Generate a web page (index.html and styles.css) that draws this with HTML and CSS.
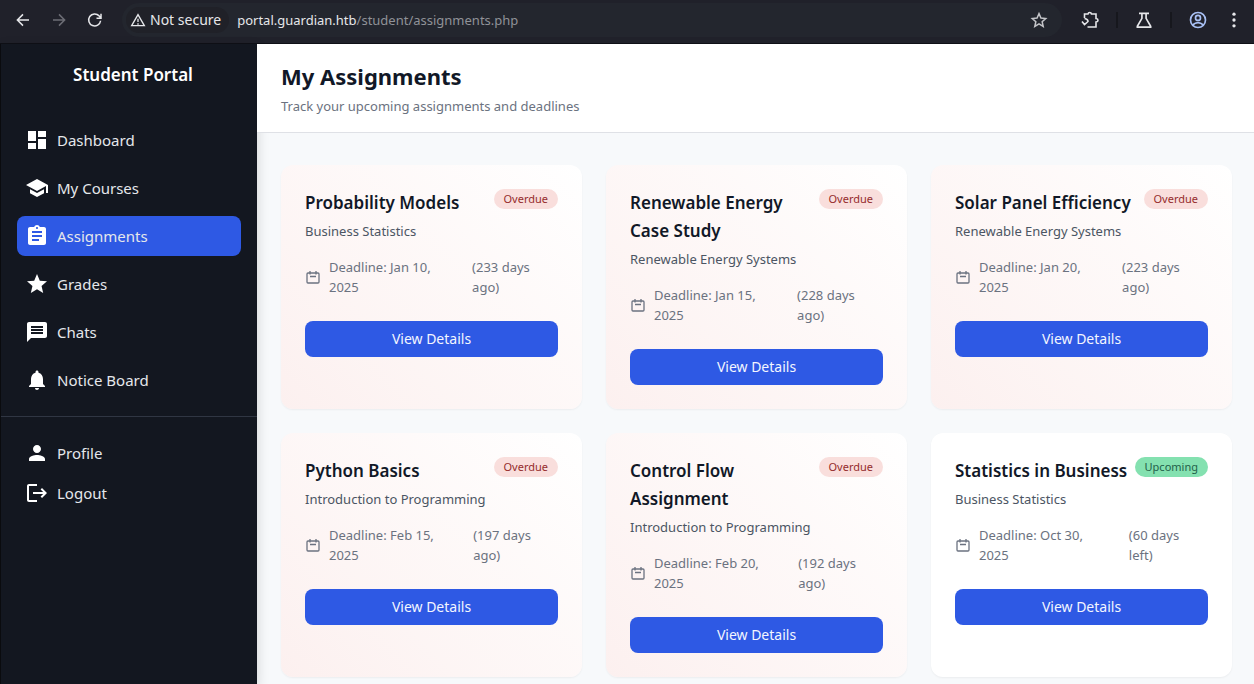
FILE: index.html
```html
<!DOCTYPE html>
<html lang="en">
<head>
<meta charset="utf-8">
<title>My Assignments</title>
<link rel="stylesheet" href="styles.css">
</head>
<body>
<div class="window">
  <div class="toolbar">
    <button class="tool" aria-label="Back"><svg viewBox="0 0 24 24"><path d="M20 12H5M12 4.500L4.500 12L12 19.500"/></svg></button>
    <button class="tool tool-off" aria-label="Forward" disabled><svg viewBox="0 0 24 24"><path d="M4 12h15M12 4.500L19.500 12L12 19.500"/></svg></button>
    <button class="tool" aria-label="Reload"><svg viewBox="0 0 24 24"><path d="M19.500 13A8 8 0 1 1 17.500 6.500L19.500 9M20 3.500V9.500H14"/></svg></button>
    <div class="address">
      <button class="security"><svg viewBox="0 0 24 24"><path d="M12 4L2.500 20.500H21.500ZM12 10v5M12 17v2"/></svg>Not secure</button>
      <span class="url">portal.guardian.htb<span class="path">/student/assignments.php</span></span>
      <button class="tool bookmark" aria-label="Bookmark"><svg viewBox="0 0 24 24"><path d="M12 3.500l2.600 5.900 6.400.6-4.800 4.300 1.400 6.300L12 17.300l-5.600 3.300 1.400-6.300L3 10l6.400-.6z"/></svg></button>
    </div>
    <div class="actions">
      <button class="tool" aria-label="Extensions"><svg class="puzzle" viewBox="0 0 20 20"><path d="M4.500 8V4H8Q8.200 2.500 9.700 2.500T11.500 4H16V8.500Q18 8.700 18 10.200T16 12V17H7.500M2 11.500L4.500 14.500L8 11.500Q8 9 4.500 8.500"/></svg></button>
      <span class="rule"></span>
      <button class="tool" aria-label="Labs"><svg viewBox="0 0 24 24"><path d="M6 4H18M9.500 4V10L4 19.500V20.500H20V19.500L14.500 10V4"/></svg></button>
      <span class="rule"></span>
      <button class="tool profile" aria-label="Browser profile"><svg viewBox="0 0 24 24"><circle cx="12" cy="12" r="9"/><circle cx="12" cy="9.500" r="3"/><path d="M5.500 18Q12 12.500 18.500 18"/></svg></button>
      <button class="tool menu" aria-label="Menu"><svg viewBox="0 0 24 24"><circle cx="12" cy="5" r="2"/><circle cx="12" cy="12" r="2"/><circle cx="12" cy="19" r="2"/></svg></button>
    </div>
  </div>
  <div class="app">
    <aside class="sidebar">
      <h2 class="brand">Student Portal</h2>
      <nav class="nav">
        <a href="#"><svg viewBox="0 0 24 24"><path d="M3 13h8V3H3zm0 8h8v-6H3zm10 0h8V11h-8zm0-18v6h8V3z"/></svg>Dashboard</a>
        <a href="#"><svg viewBox="0 0 24 24"><path d="M5 13.180v4L12 21l7-3.820v-4L12 17zM12 3L1 9l11 6 9-4.910V17h2V9z"/></svg>My Courses</a>
        <a href="#" class="active"><svg viewBox="0 0 24 24"><path d="M19 3h-4.180C14.400 1.840 13.300 1 12 1s-2.400.84-2.820 2H5c-1.100 0-2 .9-2 2v14c0 1.100.9 2 2 2h14c1.100 0 2-.9 2-2V5c0-1.100-.9-2-2-2zm-7 0c.55 0 1 .45 1 1s-.45 1-1 1-1-.45-1-1 .45-1 1-1zm2 14H7v-2h7zm3-4H7v-2h10zm0-4H7V7h10z"/></svg>Assignments</a>
        <a href="#"><svg viewBox="0 0 24 24"><path d="M12 17.270L18.180 21l-1.640-7.030L22 9.240l-7.190-.61L12 2 9.190 8.630 2 9.240l5.460 4.730L5.820 21z"/></svg>Grades</a>
        <a href="#"><svg viewBox="0 0 24 24"><path d="M20 2H4c-1.100 0-1.990.9-1.990 2L2 22l4-4h14c1.100 0 2-.9 2-2V4c0-1.100-.9-2-2-2zm-2 12H6v-2h12zm0-3H6V9h12zm0-3H6V6h12z"/></svg>Chats</a>
        <a href="#"><svg viewBox="0 0 24 24"><path d="M12 22c1.100 0 2-.9 2-2h-4c0 1.100.89 2 2 2zm6-6v-5c0-3.070-1.640-5.640-4.500-6.320V4c0-.83-.67-1.500-1.500-1.500s-1.500.67-1.500 1.500v.68C7.630 5.360 6 7.920 6 11v5l-2 2v1h16v-1z"/></svg>Notice Board</a>
      </nav>
      <nav class="nav account">
        <a href="#"><svg viewBox="0 0 24 24"><path d="M12 12c2.210 0 4-1.790 4-4s-1.790-4-4-4-4 1.790-4 4 1.790 4 4 4zm0 2c-2.670 0-8 1.340-8 4v2h16v-2c0-2.660-5.330-4-8-4z"/></svg>Profile</a>
        <a href="#"><svg viewBox="0 0 24 24"><path d="M17 7l-1.410 1.410L18.170 11H8v2h10.170l-2.580 2.580L17 17l5-5zM4 5h8V3H4c-1.100 0-2 .9-2 2v14c0 1.100.9 2 2 2h8v-2H4z"/></svg>Logout</a>
      </nav>
    </aside>
    <main class="main">
      <header class="head"><h1>My Assignments</h1><p>Track your upcoming assignments and deadlines</p></header>
      <div class="grid">
        <article class="card overdue"><div class="top"><div><h3>Probability Models</h3><p>Business Statistics</p></div><span class="badge">Overdue</span></div>
          <div class="due"><svg viewBox="0 0 16 16"><path d="M3 4h10q1 0 1 1v8q0 1-1 1H3q-1 0-1-1V5q0-1 1-1zM5 2v3.500M11 2v3.500M5 7.500h6"/></svg><span class="date">Deadline: Jan 10, 2025</span><span class="left">(233 days ago)</span></div><a class="view" href="#">View Details</a></article>
        <article class="card overdue"><div class="top"><div><h3>Renewable Energy Case Study</h3><p>Renewable Energy Systems</p></div><span class="badge">Overdue</span></div>
          <div class="due"><svg viewBox="0 0 16 16"><path d="M3 4h10q1 0 1 1v8q0 1-1 1H3q-1 0-1-1V5q0-1 1-1zM5 2v3.500M11 2v3.500M5 7.500h6"/></svg><span class="date">Deadline: Jan 15, 2025</span><span class="left">(228 days ago)</span></div><a class="view" href="#">View Details</a></article>
        <article class="card overdue"><div class="top"><div><h3>Solar Panel Efficiency</h3><p>Renewable Energy Systems</p></div><span class="badge">Overdue</span></div>
          <div class="due"><svg viewBox="0 0 16 16"><path d="M3 4h10q1 0 1 1v8q0 1-1 1H3q-1 0-1-1V5q0-1 1-1zM5 2v3.500M11 2v3.500M5 7.500h6"/></svg><span class="date">Deadline: Jan 20, 2025</span><span class="left">(223 days ago)</span></div><a class="view" href="#">View Details</a></article>
        <article class="card overdue"><div class="top"><div><h3>Python Basics</h3><p>Introduction to Programming</p></div><span class="badge">Overdue</span></div>
          <div class="due"><svg viewBox="0 0 16 16"><path d="M3 4h10q1 0 1 1v8q0 1-1 1H3q-1 0-1-1V5q0-1 1-1zM5 2v3.500M11 2v3.500M5 7.500h6"/></svg><span class="date">Deadline: Feb 15, 2025</span><span class="left">(197 days ago)</span></div><a class="view" href="#">View Details</a></article>
        <article class="card overdue"><div class="top"><div><h3>Control Flow Assignment</h3><p>Introduction to Programming</p></div><span class="badge">Overdue</span></div>
          <div class="due"><svg viewBox="0 0 16 16"><path d="M3 4h10q1 0 1 1v8q0 1-1 1H3q-1 0-1-1V5q0-1 1-1zM5 2v3.500M11 2v3.500M5 7.500h6"/></svg><span class="date">Deadline: Feb 20, 2025</span><span class="left">(192 days ago)</span></div><a class="view" href="#">View Details</a></article>
        <article class="card"><div class="top"><div><h3>Statistics in Business</h3><p>Business Statistics</p></div><span class="badge upcoming">Upcoming</span></div>
          <div class="due"><svg viewBox="0 0 16 16"><path d="M3 4h10q1 0 1 1v8q0 1-1 1H3q-1 0-1-1V5q0-1 1-1zM5 2v3.500M11 2v3.500M5 7.500h6"/></svg><span class="date">Deadline: Oct 30, 2025</span><span class="left">(60 days left)</span></div><a class="view" href="#">View Details</a></article>
      </div>
    </main>
  </div>
</div>
</body>
</html>
```

FILE: styles.css
```css
* { box-sizing: border-box; }
body, h1, h2, h3, p { margin: 0; }
body { font-family: "Noto Sans", sans-serif; font-size: 13px; line-height: 20px; color: #111827; }
a { text-decoration: none; color: inherit; }
button { font: inherit; color: inherit; background: none; border: 0; padding: 0; }

.window { height: 100vh; display: flex; flex-direction: column; overflow: hidden; }

.toolbar { display: flex; align-items: center; padding: 3px 10px 6px 14px; gap: 18px; background: #20212a; border-bottom: 1px solid #0f1016; color: #e6e7ea; }
.tool { display: flex; flex: none; }
.tool svg, .security svg { width: 18px; height: 18px; fill: none; stroke: currentColor; stroke-width: 2; }
.tool-off { color: #6c6d75; }
.address { flex: 1; display: flex; align-items: center; height: 34px; padding: 0 14px 0 4px; border-radius: 17px; background: #23262e; }
.security { display: flex; align-items: center; gap: 4px; height: 26px; padding: 0 8px 0 4px; border-radius: 13px; background: #202128; font-size: 14px; }
.security svg { width: 16px; height: 16px; }
.url { flex: 1; margin-left: 8px; }
.path { color: #909298; }
.bookmark { color: #c4c5c9; }
.actions { display: flex; align-items: center; gap: 16px; }
.actions .tool svg { width: 20px; height: 20px; }
.actions .tool .puzzle { stroke-width: 1.6; }
.rule { width: 2px; height: 16px; background: #16171d; }
.profile { color: #a8c0f4; }
.tool.menu svg { fill: currentColor; stroke: none; }

.app { flex: 1; min-height: 0; display: flex; border-left: 1px solid #0b0c10; }
.sidebar { width: 256px; flex: none; background: #131720; color: #fff; position: relative; z-index: 1; box-shadow: 0 4px 12px rgba(0, 0, 0, .16); }
.brand { padding: 18px 0 18px 8px; text-align: center; font-size: 17px; line-height: 26px; font-weight: 600; }
.nav { display: flex; flex-direction: column; gap: 8px; padding: 14px 16px 16px; }
.nav a { display: flex; align-items: center; gap: 8px; height: 40px; padding: 0 8px; border-radius: 8px; font-size: 15px; color: #e5e7eb; }
.nav svg { width: 24px; height: 24px; fill: #fff; }
.nav .active { background: #2e59e4; }
.account { border-top: 1px solid #303643; gap: 0; padding-top: 16px; }

.main { flex: 1; min-width: 0; background: #f7f9fb; }
.head { position: relative; z-index: 2; padding: 16px 24px; background: #fff; border-bottom: 1px solid #dfe1e6; }
.head h1 { font-size: 22px; line-height: 32px; font-weight: 700; }
.head p { margin-top: 4px; color: #6b7280; }
.grid { display: grid; grid-template-columns: repeat(3, minmax(0, 1fr)); gap: 24px; padding: 32px 22px 24px 24px; }
.card { padding: 24px; border-radius: 12px; background: #fff; box-shadow: 0 1px 2px rgba(0, 0, 0, .05); }
.overdue { background: linear-gradient(45deg, #fcf0ef, #fff); }
.top { display: flex; justify-content: space-between; align-items: flex-start; margin-bottom: 16px; }
.card h3 { font-size: 17px; line-height: 28px; font-weight: 600; }
.card p { color: #4b5563; }
.card h3 + p { margin-top: 4px; }
.badge { flex: none; padding: 2px 10px; border-radius: 10px; font-size: 11px; line-height: 16px; background: #f9dedc; color: #952c2c; }
.badge.upcoming { background: #84e1b0; color: #1f5f49; }
.due { display: flex; align-items: center; gap: 8px; margin-bottom: 24px; color: #6b7280; }
.due svg { width: 16px; height: 16px; flex: none; fill: none; stroke: currentColor; stroke-width: 1.3; }
.date { padding-right: 16px; }
.left { padding-right: 8px; }
.view { display: block; padding: 8px; border-radius: 8px; background: #2e59e4; color: #f3f6ff; font-size: 14px; text-align: center; }
```
